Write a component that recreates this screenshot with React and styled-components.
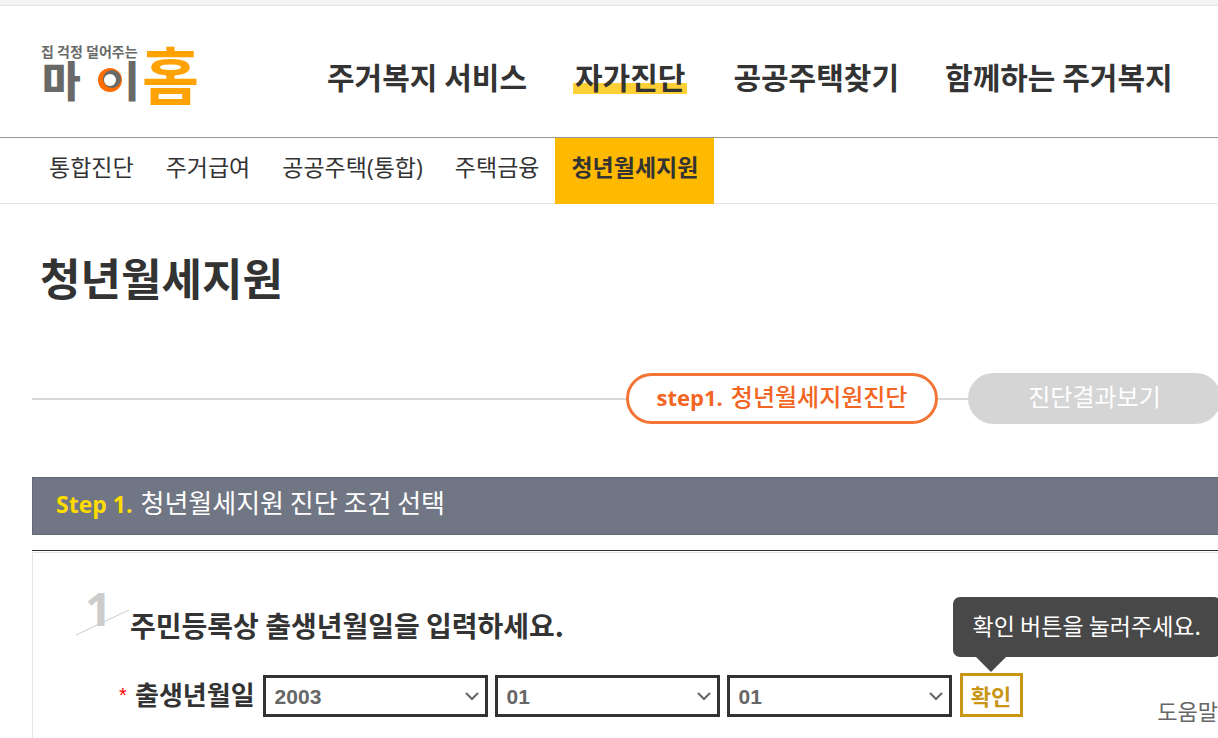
import { useState } from "react";
import styled, { createGlobalStyle } from "styled-components";

const GlobalStyle = createGlobalStyle`
    * {
        box-sizing: border-box;
    }
    body {
        margin: 0;
        overflow-x: hidden;
        background: #fff;
        color: #333;
        font-family: "Noto Sans CJK KR", "Noto Sans", sans-serif;
    }
    h1, h2, h3, p {
        margin: 0;
    }
`;

const TopStrip = styled.div`
    height: 6px;
    background: #f4f4f4;
    border-bottom: 1px solid #e5e5e5;
`;

const Header = styled.header`
    display: flex;
    align-items: center;
    height: 132px;
    padding: 0 40px;
    border-bottom: 1px solid #999;
`;

const LogoLink = styled.a`
    display: flex;
    flex: none;
    width: 287px;

    > svg {
        overflow: visible;
    }
`;

const MainMenu = styled.nav`
    display: flex;
    gap: 46px;
    padding-top: 8px;
    white-space: nowrap;
`;

const MenuLink = styled.a`
    padding: ${({ $active }) => ($active ? "0 2px" : "0")};
    color: #333;
    font-size: 30px;
    font-weight: 700;
    line-height: 38px;
    text-decoration: none;
    background: ${({ $active }) =>
        $active ? "linear-gradient(#ffd035, #ffd035) 0 26px / 100% 11px no-repeat" : "none"};
`;

const SubMenu = styled.nav`
    display: flex;
    height: 66px;
    padding-left: 33px;
    border-bottom: 1px solid #e5e5e5;
`;

const SubLink = styled.a`
    height: 66px;
    padding: 0 16px;
    color: #333;
    font-family: "Open Sans", "Noto Sans CJK KR", sans-serif;
    font-size: 23px;
    font-weight: ${({ $active }) => ($active ? 700 : 400)};
    line-height: 58px;
    text-decoration: none;
    white-space: nowrap;
    background: ${({ $active }) => ($active ? "#ffb900" : "transparent")};
`;

const Content = styled.main`
    padding: 44px 0 0 32px;
`;

const PageTitle = styled.h1`
    padding-left: 8px;
    font-size: 44px;
    font-weight: 700;
    line-height: 58px;
`;

const Steps = styled.ol`
    display: flex;
    align-items: center;
    margin: 67px -3px 0 0;
    padding: 0;
    list-style: none;
`;

const StepLine = styled.li`
    flex: ${({ $short }) => ($short ? "0 0 30px" : "1")};
    height: 2px;
    background: #d8d8d8;
`;

const StepPill = styled.li`
    flex: none;
    width: ${({ $current }) => ($current ? "312px" : "253px")};
    height: 51px;
    border: 3px solid ${({ $current }) => ($current ? "#f37435" : "#d5d5d5")};
    border-radius: 26px;
    background: ${({ $current }) => ($current ? "#fff" : "#d5d5d5")};
    color: ${({ $current }) => ($current ? "#f26522" : "#fff")};
    font-size: 24px;
    font-weight: ${({ $current }) => ($current ? 500 : 400)};
    line-height: 40px;
    text-align: center;
`;

const Latin = styled.span`
    margin-right: 8px;
    font-family: "Open Sans", "Noto Sans", sans-serif;
    font-size: 22px;
    font-weight: 700;
`;

const BarStep = styled(Latin)`
    color: #ffdc00;
    font-size: 23px;
`;

const SectionBar = styled.h2`
    height: 58px;
    margin-top: 53px;
    padding-left: 23px;
    border: 1px solid #626874;
    border-right: 0;
    background: #707683;
    color: #fff;
    font-size: 26px;
    font-weight: 400;
    line-height: 48px;
`;

const PanelTop = styled.div`
    margin-top: 15px;
    padding-top: 1px;
    border-top: 1px solid #333;
`;

const Panel = styled.section`
    min-height: 186px;
    padding: 37px 0 0 42px;
    border: 1px solid #e5e5e5;
    border-width: 1px 0 0 1px;
`;

const Question = styled.h3`
    display: flex;
    font-size: 28px;
    font-weight: 700;
    line-height: 40px;

    > svg {
        flex: none;
        overflow: visible;
    }
`;

const QuestionText = styled.span`
    padding-top: 15px;
`;

const Fields = styled.div`
    display: flex;
    align-items: center;
    margin-top: 28px;
    padding-left: 44px;
    white-space: nowrap;
`;

const Required = styled.span`
    width: 16px;
    color: #f00;
    font-family: "Liberation Sans", Arial, sans-serif;
    font-size: 20px;
    line-height: 24px;
`;

const FieldLabel = styled.label`
    margin-right: 8px;
    padding-bottom: 2px;
    font-size: 26px;
    font-weight: 700;
    line-height: 38px;
`;

const SelectBox = styled.div`
    display: grid;
    flex: 0 0 225px;
    align-items: center;
    align-self: flex-end;
    margin-right: 7px;

    > * {
        grid-area: 1 / 1;
    }
    > svg {
        justify-self: end;
        margin-right: 8px;
        pointer-events: none;
    }
`;

const Select = styled.select`
    width: 100%;
    height: 42px;
    padding: 0 30px 0 9px;
    border: 3px solid #333;
    border-radius: 0;
    background: #fff;
    color: #666;
    font-family: "Liberation Sans", Arial, sans-serif;
    font-size: 21px;
    font-weight: 700;
    appearance: none;
`;

const ConfirmWrap = styled.div`
    position: relative;
    margin-left: 1px;
`;

const ConfirmButton = styled.button`
    display: block;
    width: 63px;
    height: 44px;
    padding: 0;
    border: 3px solid #c89614;
    background: #fff;
    color: #c89614;
    font-family: inherit;
    font-size: 22px;
    font-weight: 700;
    line-height: 36px;
    cursor: pointer;
`;

const Tooltip = styled.div`
    position: absolute;
    bottom: 60px;
    left: -7px;
    padding: 0 20px 4px;
    border-radius: 7px;
    background: #484848;
    color: #fff;
    font-size: 23px;
    line-height: 56px;

    &::after {
        content: "";
        position: absolute;
        top: 100%;
        left: 23px;
        border: 15px solid transparent;
        border-top-color: #484848;
        border-bottom: 0;
    }
`;

const HelpLink = styled.a`
    align-self: flex-end;
    margin: 0 0 -9px auto;
    color: #666;
    font-size: 22px;
    line-height: 32px;
    text-decoration: none;
`;

const Logo = () => (
    <svg width="160" height="72" viewBox="0 0 160 72" role="img" aria-label="마이홈">
        <g fontFamily="'Noto Sans CJK KR', sans-serif" fontWeight="900">
            <text x="1" y="21" fontSize="14" fontWeight="700" fill="#696a68">
                집 걱정 덜어주는
            </text>
            <text x="2" y="61" fontSize="42" fill="#696a68">마</text>
            <text x="61" y="61" fontSize="42" fill="#696a68">이</text>
            <text x="102" y="64" fontSize="62" fontWeight="700" fill="#ffa205">홈</text>
        </g>
        <rect x="58" y="24" width="29" height="42" fill="#fff" />
        <circle cx="70" cy="44" r="12" fill="#ff6c00" />
        <circle cx="72" cy="43" r="9" fill="#696a68" />
        <circle cx="70" cy="44" r="6" fill="#fff" />
    </svg>
);

const Chevron = () => (
    <svg width="16" height="10" viewBox="0 0 16 10" fill="none" stroke="#666" strokeWidth="2">
        <path d="M2 2 L8 8 L14 2" />
    </svg>
);

const NumberMark = ({ value }) => (
    <svg width="55" height="48" viewBox="0 0 55 48">
        <text x="10" y="36" fill="#ccc" fontFamily="'Open Sans', sans-serif" fontSize="47" fontWeight="700">
            {value}
        </text>
        <path d="M1 45 L54 20" stroke="#ccc" />
    </svg>
);

const menus = ["주거복지 서비스", "자가진단", "공공주택찾기", "함께하는 주거복지"];
const subMenus = ["통합진단", "주거급여", "공공주택(통합)", "주택금융", "청년월세지원"];

const range = (from, to) =>
    Array.from({ length: to - from + 1 }, (_, i) => String(from + i).padStart(2, "0"));

const birthFields = [
    { name: "year", label: "년", options: range(1980, 2010) },
    { name: "month", label: "월", options: range(1, 12) },
    { name: "day", label: "일", options: range(1, 31) },
];

const App = () => {
    const [birth, setBirth] = useState({ year: "2003", month: "01", day: "01" });

    const handleChange = (e) => {
        setBirth({ ...birth, [e.target.name]: e.target.value });
    };

    return (
        <>
            <GlobalStyle />
            <TopStrip />
            <Header>
                <LogoLink href="#home">
                    <Logo />
                </LogoLink>
                <MainMenu>
                    {menus.map((menu) => (
                        <MenuLink key={menu} href="#menu" $active={menu === "자가진단"}>
                            {menu}
                        </MenuLink>
                    ))}
                </MainMenu>
            </Header>
            <SubMenu>
                {subMenus.map((menu) => (
                    <SubLink key={menu} href="#submenu" $active={menu === "청년월세지원"}>
                        {menu}
                    </SubLink>
                ))}
            </SubMenu>
            <Content>
                <PageTitle>청년월세지원</PageTitle>
                <Steps>
                    <StepLine aria-hidden="true" />
                    <StepPill $current>
                        <Latin>step1.</Latin>
                        청년월세지원진단
                    </StepPill>
                    <StepLine $short aria-hidden="true" />
                    <StepPill>진단결과보기</StepPill>
                </Steps>
                <SectionBar>
                    <BarStep>Step 1.</BarStep>
                    청년월세지원 진단 조건 선택
                </SectionBar>
                <PanelTop>
                    <Panel>
                        <Question>
                            <NumberMark value="1" />
                            <QuestionText>주민등록상 출생년월일을 입력하세요.</QuestionText>
                        </Question>
                        <Fields>
                            <Required>*</Required>
                            <FieldLabel htmlFor="year">출생년월일</FieldLabel>
                            {birthFields.map(({ name, label, options }) => (
                                <SelectBox key={name}>
                                    <Select
                                        id={name}
                                        name={name}
                                        aria-label={label}
                                        value={birth[name]}
                                        onChange={handleChange}
                                    >
                                        {options.map((option) => (
                                            <option key={option}>{option}</option>
                                        ))}
                                    </Select>
                                    <Chevron />
                                </SelectBox>
                            ))}
                            <ConfirmWrap>
                                <ConfirmButton type="button">확인</ConfirmButton>
                                <Tooltip role="tooltip">확인 버튼을 눌러주세요.</Tooltip>
                            </ConfirmWrap>
                            <HelpLink href="#help">도움말</HelpLink>
                        </Fields>
                    </Panel>
                </PanelTop>
            </Content>
        </>
    );
};

export default App;
